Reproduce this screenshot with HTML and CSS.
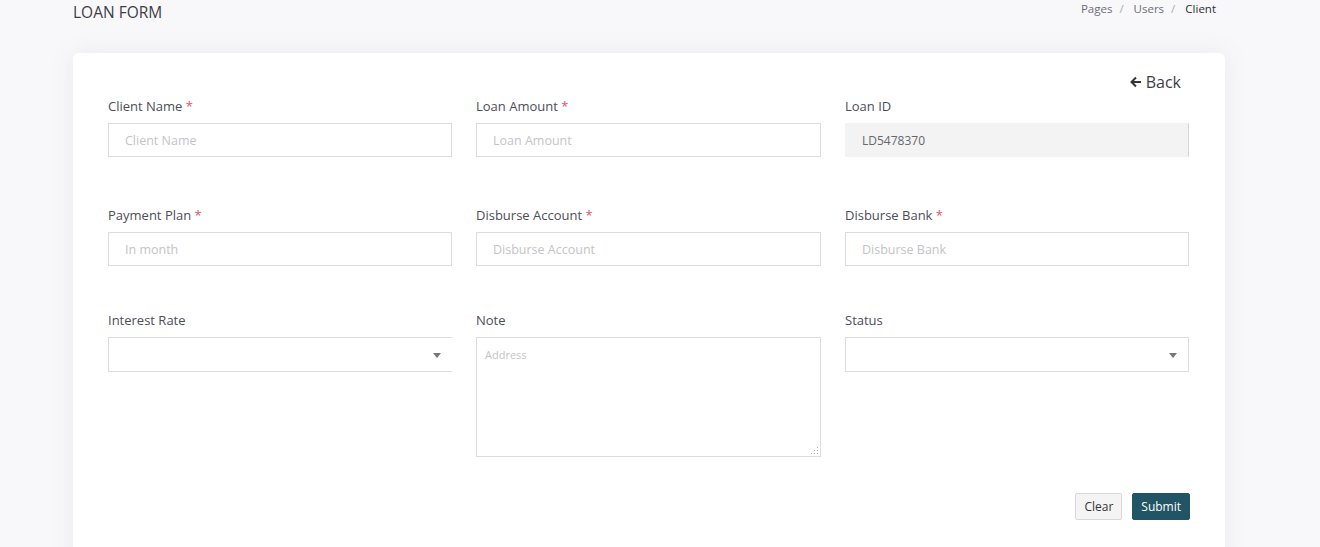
FILE: index.html
```html
<!DOCTYPE html>
<html>
<head>
<meta charset="utf-8">
<link rel="stylesheet" href="styles.css">
</head>
<body>
<div class="page">
  <div class="topbar">
    <h1 class="title">LOAN FORM</h1>
    <nav class="crumbs">
      <span class="crumb">Pages</span><span class="sep">/</span>
      <span class="crumb">Users</span><span class="sep">/</span>
      <span class="crumb active">Client</span>
    </nav>
  </div>
  <div class="card">
    <div class="back-row">
      <a class="back"><svg width="12" height="12" viewBox="0 0 12 12"><path d="M11 6H2M6 1.5L1.5 6 6 10.5" fill="none" stroke="#333" stroke-width="2"/></svg>Back</a>
    </div>
    <div class="grid row1">
      <div class="field"><label>Client Name <span class="req">*</span></label><div class="input ph">Client Name</div></div>
      <div class="field"><label>Loan Amount <span class="req">*</span></label><div class="input ph">Loan Amount</div></div>
      <div class="field"><label>Loan ID</label><div class="input readonly">LD5478370</div></div>
    </div>
    <div class="grid row2">
      <div class="field"><label>Payment Plan <span class="req">*</span></label><div class="input ph">In month</div></div>
      <div class="field"><label>Disburse Account <span class="req">*</span></label><div class="input ph">Disburse Account</div></div>
      <div class="field"><label>Disburse Bank <span class="req">*</span></label><div class="input ph">Disburse Bank</div></div>
    </div>
    <div class="grid row3">
      <div class="field"><label>Interest Rate</label><div class="select open-right"><span class="caret"></span></div></div>
      <div class="field"><label>Note</label><div class="textarea ph">Address<span class="grip"></span></div></div>
      <div class="field"><label>Status</label><div class="select"><span class="caret"></span></div></div>
    </div>
    <div class="actions">
      <button class="btn btn-clear">Clear</button>
      <button class="btn btn-submit">Submit</button>
    </div>
  </div>
</div>
</body>
</html>
```
FILE: styles.css
```css
* { box-sizing: border-box; }
html, body { margin: 0; padding: 0; }
body {
  background: #f8f8fa;
  font-family: "Open Sans", "Noto Sans", sans-serif;
  color: #4d4d5a;
  height: 547px;
  overflow: hidden;
}
.page { padding: 0 95px 0 73px; }
.topbar {
  display: flex;
  justify-content: space-between;
  align-items: flex-start;
  height: 53px;
}
.title {
  margin: 1px 0 0;
  font-size: 15.5px;
  font-weight: 400;
  color: #3d3d48;
  letter-spacing: 0;
}
.crumbs {
  font-size: 11.5px;
  margin-top: 1px;
  padding-right: 9px;
  color: #6c6c78;
}
.sep { color: #aaa; margin: 0 7px; }
.crumb.active { color: #2d2d36; }
.card {
  background: #fff;
  border-radius: 6px;
  box-shadow: 0 0 24px rgba(120, 120, 170, 0.1);
  padding: 19px 36px 40px 35px;
  height: 520px;
}
.back-row { display: flex; justify-content: flex-end; padding-right: 8px; }
.back {
  font-size: 16px;
  color: #3d3d48;
  display: flex;
  align-items: center;
  gap: 4px;
  line-height: 20px;
}
.grid {
  display: grid;
  grid-template-columns: 344px 345px 344px;
  column-gap: 24px;
}
.row1 { margin-top: 5px; }
.row2 { margin-top: 49px; }
.row3 { margin-top: 45px; }
label {
  display: block;
  font-size: 13px;
  line-height: 18px;
  color: #4d4d5a;
  margin-bottom: 8px;
}
.req { color: #e8506a; }
.input {
  height: 34px;
  border: 1px solid #dcdcdc;
  font-size: 12.5px;
  line-height: 32px;
  padding: 1px 16px 0;
  background: #fff;
}
.ph { color: #c4c4c8; }
.readonly {
  background: #f3f3f3;
  border-color: #f3f3f3 #d6d6d6 #f3f3f3 #f3f3f3;
  color: #66666f;
  font-size: 12px;
}
.select {
  height: 35px;
  border: 1px solid #dcdcdc;
  position: relative;
  background: #fff;
}
.select.open-right { border-right: none; }
.caret {
  position: absolute;
  right: 11px;
  top: 15px;
  width: 0; height: 0;
  border-left: 4px solid transparent;
  border-right: 4px solid transparent;
  border-top: 5px solid #777;
}
.textarea {
  height: 120px;
  border: 1px solid #dcdcdc;
  font-size: 11px;
  padding: 9px 8px;
  position: relative;
  line-height: 16px;
}
.grip {
  position: absolute;
  right: 2px; bottom: 2px;
  width: 8px; height: 8px;
  background:
    radial-gradient(circle, #aaa 0.9px, transparent 1px) 0 0 / 3px 3px;
  clip-path: polygon(100% 0, 100% 100%, 0 100%);
}
.actions {
  display: flex;
  justify-content: flex-end;
  gap: 10px;
  margin-top: 36px;
  margin-right: -1px;
}
.btn {
  font-family: inherit;
  font-size: 12px;
  height: 27px;
  border-radius: 2px;
  padding: 0 8px;
  cursor: pointer;
}
.btn-clear {
  background: #f4f4f4;
  border: 1px solid #d8d8d8;
  color: #333;
}
.btn-submit {
  background: #215565;
  border: 1px solid #215565;
  color: #fff;
}
```
